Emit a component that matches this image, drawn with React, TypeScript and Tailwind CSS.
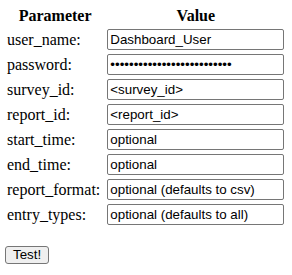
import React from 'react';

const rows = [
  { name: 'user_name', value: 'Dashboard_User' },
  { name: 'password', value: 'xxxxxxxxxxxxxxxxxxxxxxxxxx', type: 'password' },
  { name: 'survey_id', value: '<survey_id>' },
  { name: 'report_id', value: '<report_id>' },
  { name: 'start_time', value: 'optional' },
  { name: 'end_time', value: 'optional' },
  { name: 'report_format', value: 'optional (defaults to csv)' },
  { name: 'entry_types', value: 'optional (defaults to all)' },
];

const App = () => {
  return (
    <div className="bg-white w-[292px] h-[275px] pl-[4px] pt-[4px] font-['Liberation_Serif',serif] text-black">
      <table className="border-separate border-spacing-[2px]">
        <thead>
          <tr>
            <th className="p-[1px] text-[16px] font-bold text-center leading-[18px] font-['Liberation_Serif',serif]">Parameter</th>
            <th className="p-[1px] text-[16px] font-bold text-center leading-[18px] font-['Liberation_Serif',serif]">Value</th>
          </tr>
        </thead>
        <tbody>
          {rows.map((r) => (
            <tr key={r.name}>
              <td className="p-[1px] pr-[4px] text-[16px] leading-[18px]">{r.name}:</td>
              <td className="p-[1px]">
                <input
                  type={r.type || 'text'}
                  defaultValue={r.value}
                  readOnly
                  className="block w-[177px] h-[21px] px-[2px] py-[1px] border border-[#767676] rounded-[2px] text-[13.33px] font-['Liberation_Sans',Arial,sans-serif] text-black outline-none"
                />
              </td>
            </tr>
          ))}
        </tbody>
      </table>
      <button className="mt-[18px] ml-[1px] h-[18px] px-[7px] bg-[#efefef] border border-[#767676] rounded-[3px] text-[13.33px] leading-[16px] font-['Liberation_Sans',Arial,sans-serif] text-black">
        Test!
      </button>
    </div>
  );
};

export default App;
